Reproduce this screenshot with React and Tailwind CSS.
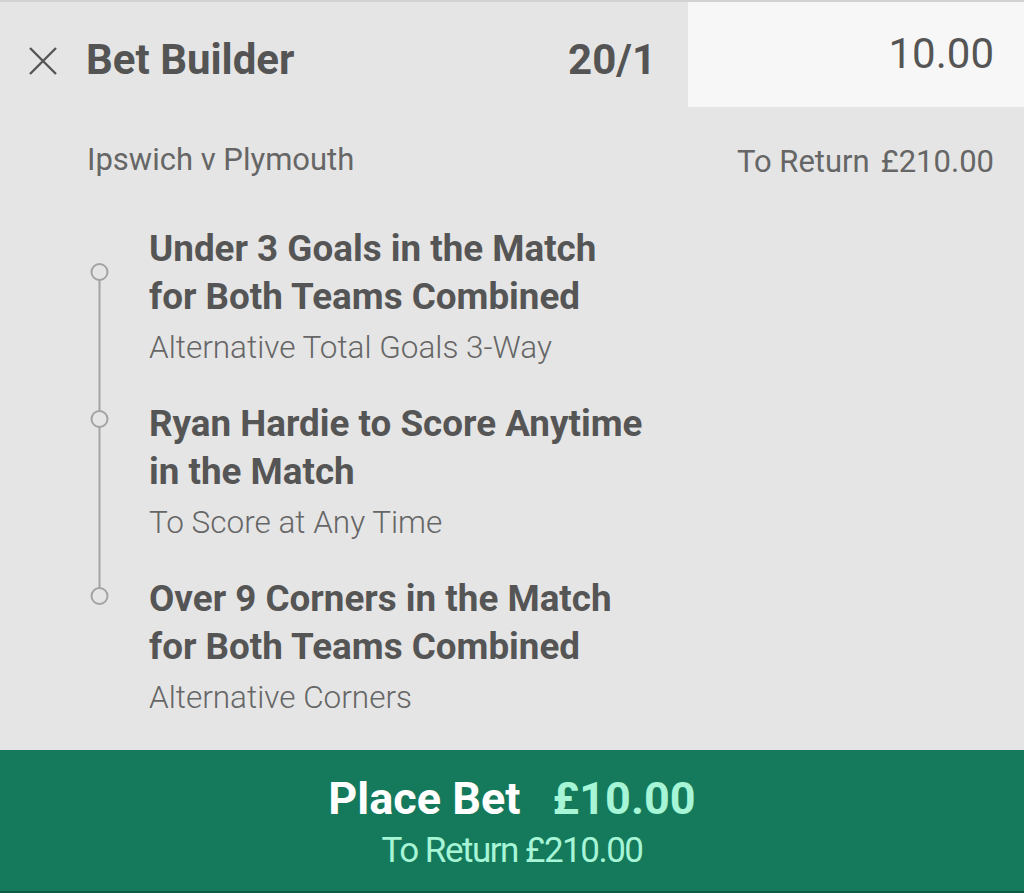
const legs = [
  {
    title: ['Under 3 Goals in the Match', 'for Both Teams Combined'],
    market: 'Alternative Total Goals 3-Way',
  },
  {
    title: ['Ryan Hardie to Score Anytime', 'in the Match'],
    market: 'To Score at Any Time',
  },
  {
    title: ['Over 9 Corners in the Match', 'for Both Teams Combined'],
    market: 'Alternative Corners',
  },
]

const Timeline = () => (
  <svg className="absolute left-0 top-0" width="120" height="400" viewBox="0 0 120 400">
    <line x1="99.5" y1="55" x2="99.5" y2="363" stroke="#a3a3a3" strokeWidth="2" />
    {[47, 194, 371].map((cy) => (
      <circle key={cy} cx="99.5" cy={cy} r="8" fill="#e5e5e5" stroke="#a3a3a3" strokeWidth="2" />
    ))}
  </svg>
)

export default function App() {
  return (
    <div
      className="h-[893px] w-[1024px] flex flex-col bg-[#e5e5e5] text-[#555]"
      style={{ fontFamily: 'Roboto, "Noto Sans", sans-serif' }}
    >
      <div className="h-[2px] bg-[#d2d2d2]" />

      <div className="flex-1">
        {/* header */}
        <div className="flex h-[105px]">
          <div className="flex-1 flex items-start pt-[37px]">
            <svg className="ml-[28px] mt-[7px]" width="30" height="30" viewBox="0 0 30 30">
              <path d="M2 2 L28 28 M28 2 L2 28" stroke="#555" strokeWidth="2.4" fill="none" />
            </svg>
            <div className="ml-[28px] text-[42px] leading-none font-bold text-[#545454]">Bet Builder</div>
            <div className="ml-auto mr-[32px] text-[42px] leading-none font-bold text-[#545454]">20/1</div>
          </div>
          <div className="w-[336px] bg-[#f7f7f7] flex justify-end pt-[31px] pr-[30px]">
            <span className="text-[42px] leading-none text-[#555]">10.00</span>
          </div>
        </div>

        {/* event */}
        <div className="flex items-start mt-[37px] pl-[87px] pr-[30px]">
          <div className="text-[31px] leading-none text-[#666]">Ipswich v Plymouth</div>
          <div className="ml-auto mt-[2px] text-[31px] leading-none text-[#666] flex gap-[11px]">
            <span>To Return</span>
            <span>£210.00</span>
          </div>
        </div>

        {/* legs */}
        <div className="relative mt-[48px]">
          <Timeline />
          <div className="flex flex-col gap-[32px] pl-[149px]">
            {legs.map((leg) => (
              <div key={leg.market}>
                <div className="text-[36.8px] leading-[48px] font-bold text-[#555]">
                  {leg.title.map((t) => (
                    <div key={t}>{t}</div>
                  ))}
                </div>
                <div className="mt-[7px] text-[31.5px] leading-[40px] font-light text-[#666]">{leg.market}</div>
              </div>
            ))}
          </div>
        </div>
      </div>

      {/* place bet */}
      <div className="h-[143px] flex flex-col bg-[#157a5b]">
        <div className="flex-1 flex flex-col items-center pt-[26px]">
          <div className="flex items-baseline gap-[32px] text-[45px] leading-none font-bold">
            <span className="text-white">Place Bet</span>
            <span className="text-[#a6f5d6]">£10.00</span>
          </div>
          <div className="mt-[12px] text-[35px] leading-none text-[#a6f5d6] tracking-[-1.5px]">To Return £210.00</div>
        </div>
        <div className="h-[2px] bg-[#0e5b44]" />
      </div>
    </div>
  )
}
